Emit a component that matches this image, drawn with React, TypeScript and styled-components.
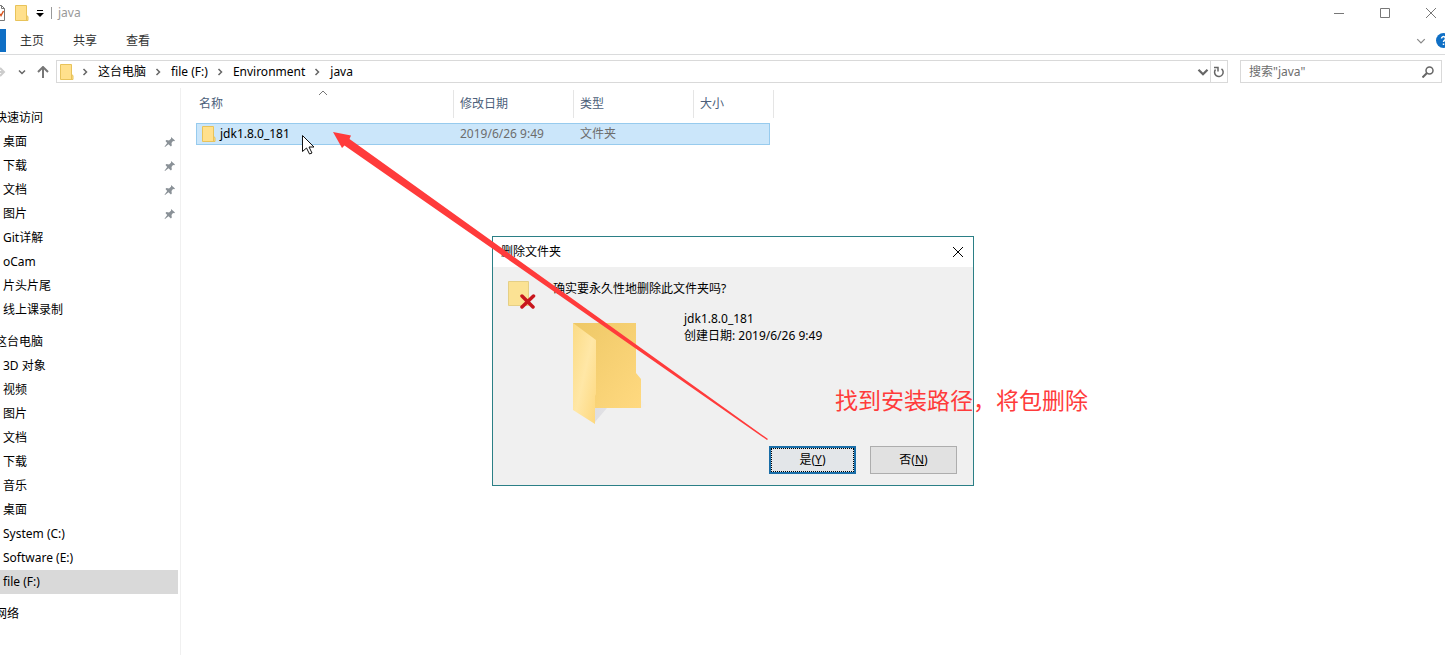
import React from "react";
import styled, { createGlobalStyle, css } from "styled-components";

const Global = createGlobalStyle`
  * { box-sizing: border-box; }
  html, body, #root { height: 100%; }
  body {
    margin: 0;
    background: #fff;
    color: #000;
    font: 12px/16px "Noto Sans", "Noto Sans CJK SC", sans-serif;
    overflow: hidden;
  }
  button, input { font: inherit; color: inherit; }
  svg { display: block; flex: none; }
`;

const Window = styled.div`
  position: relative;
  display: flex;
  flex-direction: column;
  min-height: 100%;
`;

const TitleBar = styled.header`
  display: flex;
  align-items: center;
  height: 25px;
  margin-right: -9px;
`;

const QuickTools = styled.div`
  display: flex;
  align-items: center;
  gap: 7px;
  flex: 1;
`;

const PlainButton = styled.button`
  display: flex;
  align-items: center;
  justify-content: center;
  padding: 0;
  border: 0;
  background: none;
`;

const WindowTitle = styled.h1`
  margin: 0;
  padding-left: 6px;
  border-left: 1px solid #999;
  font-size: 12px;
  font-weight: 400;
  line-height: 12px;
  color: #999;
`;

const CaptionButton = styled(PlainButton)`
  width: 46px;
  height: 24px;
`;

const Ribbon = styled.nav`
  display: flex;
  align-items: center;
  height: 30px;
  padding-top: 2px;
  border-bottom: 1px solid #dadbdc;
  color: #333;
`;

const FileTab = styled.div`
  width: 6px;
  height: 23px;
  margin-right: 14px;
  background: #0f6fc5;
`;

const RibbonTab = styled(PlainButton)`
  margin-right: 29px;
`;

const RibbonEnd = styled.div`
  display: flex;
  align-items: center;
  gap: 10px;
  margin-left: auto;
  margin-right: -6px;
`;

const AddressRow = styled.div`
  display: flex;
  align-items: center;
  height: 33px;
  padding-right: 3px;
`;

const History = styled.div`
  display: flex;
  align-items: center;
  gap: 11px;
  width: 56px;
`;

const AddressBar = styled.div`
  display: flex;
  align-items: center;
  flex: 1;
  height: 23px;
  padding-left: 3px;
  border: 1px solid #d9d9d9;
`;

const Crumbs = styled.div`
  display: flex;
  align-items: center;
  margin-left: 7px;
`;

const Crumb = styled.a`
  margin: 0 8px 0 9px;
  color: #000;
  text-decoration: none;
`;

const AddressEnd = styled.div`
  display: flex;
  align-items: center;
  height: 100%;
  margin-left: auto;
`;

const RefreshButton = styled(PlainButton)`
  width: 17px;
  height: 100%;
  margin-left: 1px;
  border-left: 1px solid #d9d9d9;
`;

const SearchBox = styled.label`
  display: flex;
  align-items: center;
  width: 202px;
  height: 23px;
  margin-left: 12px;
  padding: 0 7px 0 8px;
  border: 1px solid #d9d9d9;
`;

const SearchInput = styled.input`
  flex: 1;
  min-width: 0;
  padding: 0;
  border: 0;
  outline: 0;
  &::placeholder { color: #6d6d6d; opacity: 1; }
`;

const Content = styled.div`
  display: flex;
  flex: 1;
`;

const Tree = styled.nav`
  width: 181px;
  padding: 18px 2px 0 0;
  border-right: 1px solid #f0f0f0;
  overflow: hidden;
`;

const TreeGroup = styled.ul`
  margin: 0 0 8px;
  padding: 0;
  list-style: none;
`;

const TreeRow = styled.li<{ $root?: boolean; $selected?: boolean }>`
  display: flex;
  align-items: center;
  justify-content: space-between;
  height: 24px;
  padding: 0 2px 0 3px;
  ${(p) => p.$root && css`margin-left: -8px;`}
  ${(p) => p.$selected && css`background: #d9d9d9;`}
`;

const TreeLink = styled.a`
  color: #000;
  text-decoration: none;
  white-space: nowrap;
`;

const Main = styled.main`
  flex: 1;
  padding: 2px 0 0 15px;
`;

const FileTable = styled.table`
  width: 578px;
  table-layout: fixed;
  border-collapse: separate;
  border-spacing: 0;
  color: #6d6d6d;
  tbody::before { content: ""; display: block; height: 5px; }
`;

const Column = styled.col<{ $width: number }>`
  width: ${(p) => p.$width}px;
`;

const HeadCell = styled.th<{ $first?: boolean }>`
  height: 28px;
  padding: 0 0 0 ${(p) => (p.$first ? "3px" : "6px")};
  border-right: 1px solid #e5e5e5;
  font-weight: 400;
  text-align: left;
  color: #4c607a;
`;

const SortedHead = styled.div`
  position: relative;
  svg { position: absolute; left: 120px; top: -7px; }
`;

const Cell = styled.td`
  height: 22px;
  padding: 0 0 0 6px;
  background: #cbe6fa;
  border: solid #97cbee;
  border-width: 1px 0;
  &:first-child { border-left-width: 1px; padding-left: 5px; }
  &:last-child { border-right-width: 1px; }
`;

const FileName = styled.div`
  display: flex;
  align-items: center;
  gap: 4px;
  color: #000;
`;

const Dialog = styled.section`
  position: absolute;
  left: 492px;
  top: 236px;
  display: flex;
  flex-direction: column;
  width: 482px;
  height: 250px;
  border: 1px solid #2b7f86;
  background: #f0f0f0;
`;

const DialogTitle = styled.header`
  display: flex;
  align-items: center;
  justify-content: space-between;
  height: 30px;
  padding: 0 9px 0 8px;
  background: #fff;
`;

const DialogHeading = styled.h2`
  margin: 0;
  font-size: 12px;
  font-weight: 400;
`;

const DialogBody = styled.div`
  display: grid;
  grid-template-columns: 45px 131px 1fr;
  grid-template-rows: 29px 1fr;
  flex: 1;
  padding: 14px 0 0 15px;
`;

const DeleteIcon = styled.svg`
  grid-row: 1 / 3;
`;

const Question = styled.p`
  grid-column: 2 / 4;
  margin: 0;
`;

const Preview = styled.div`
  grid-column: 2;
  padding: 10px 0 0 19px;
`;

const Details = styled.p`
  margin: 0;
  line-height: 17px;
`;

const DialogActions = styled.footer`
  display: flex;
  justify-content: flex-end;
  gap: 14px;
  padding: 0 16px 11px;
`;

const DialogButton = styled.button<{ $primary?: boolean }>`
  width: 87px;
  height: 28px;
  padding: 0;
  background: #e1e1e1;
  border: 1px solid #adadad;
  ${(p) => p.$primary && css`
    background: #e3e6e9;
    border: 2px solid #1a6ea8;
    outline: 1px dotted #000;
    outline-offset: -3px;
  `}
`;

const Overlay = styled.svg`
  position: absolute;
  left: 0;
  top: 0;
  pointer-events: none;
`;

const Note = styled.p`
  position: absolute;
  left: 835px;
  top: 384px;
  margin: 0;
  font-size: 23px;
  line-height: 32px;
  color: #ff3b3b;
  white-space: nowrap;
`;

const SmallFolder = () => (
  <svg width="14" height="16" viewBox="0 0 14 16">
    <path d="M.5.5h11v10l1.500 1v4H.5z" fill="#ffe08c" stroke="#e8c35a" />
    <path d="M11.500 10v5" stroke="#e8c35a" fill="none" />
  </svg>
);

type ChevronProps = { dir?: "right" | "down" | "up"; size?: number; color?: string; weight?: number };

const chevronPaths = {
  right: "M2.500 1l3 3-3 3",
  down: "M1 2.500l3 3 3-3",
  up: "M0 6l4-4 4 4",
};

const Chevron = ({ dir = "right", size = 8, color = "#666", weight = 1.5 }: ChevronProps) => (
  <svg width={size} height={size} viewBox="0 0 8 8" fill="none" stroke={color} strokeWidth={weight}>
    <path d={chevronPaths[dir]} />
  </svg>
);

const Pin = () => (
  <svg width="12" height="12" viewBox="0 0 12 12" fill="#8a9197">
    <path d="M7 1l4 3.500-.8.8-1.200-.2L7.500 7l.3 2.500-.9.9-2.400-2.200L1 11 .5 10.800 3.200 7 1.500 5l.9-.9 2.600.4L7 2.800z" />
  </svg>
);

const quickAccess = [
  { name: "桌面", pinned: true },
  { name: "下载", pinned: true },
  { name: "文档", pinned: true },
  { name: "图片", pinned: true },
  { name: "Git详解" },
  { name: "oCam" },
  { name: "片头片尾" },
  { name: "线上课录制" },
];

const thisPc = ["3D 对象", "视频", "图片", "文档", "下载", "音乐", "桌面", "System (C:)", "Software (E:)", "file (F:)"];

const crumbs = ["这台电脑", "file (F:)", "Environment", "java"];

export default function App() {
  return (
    <Window>
      <Global />
      <TitleBar>
        <QuickTools>
          <svg width="8" height="16" viewBox="0 0 8 16" fill="none">
            <path d="M0 .5h1.500l3 3v12H0M1.500 .5v3h3" stroke="#777" />
            <path d="M0 9l1 1.500L3.500 6" stroke="#d9541e" strokeWidth="1.500" />
          </svg>
          <SmallFolder />
          <PlainButton aria-label="自定义快速访问工具栏">
            <svg width="8" height="8" viewBox="0 0 8 8"><path d="M1 1h6v1H1zM0 4h8L4 8z" fill="#000" /></svg>
          </PlainButton>
          <WindowTitle>java</WindowTitle>
        </QuickTools>
        <CaptionButton aria-label="最小化">
          <svg width="10" height="10" stroke="#777"><path d="M0 5.500h10" /></svg>
        </CaptionButton>
        <CaptionButton aria-label="最大化">
          <svg width="10" height="10" stroke="#777" fill="none"><path d="M.5.5h9v9h-9z" /></svg>
        </CaptionButton>
        <CaptionButton aria-label="关闭">
          <svg width="10" height="10" stroke="#777"><path d="M0 0l10 10M10 0L0 10" /></svg>
        </CaptionButton>
      </TitleBar>
      <Ribbon>
        <FileTab />
        <RibbonTab>主页</RibbonTab>
        <RibbonTab>共享</RibbonTab>
        <RibbonTab>查看</RibbonTab>
        <RibbonEnd>
          <Chevron dir="down" size={10} color="#888" weight={1} />
          <svg width="15" height="15" viewBox="0 0 15 15">
            <circle cx="7.500" cy="7.500" r="7.500" fill="#0f6fc5" />
            <path d="M5.500 5.500a2 2 0 1 1 3 1.800c-.8.500-1 .8-1 1.700M7.500 10.500v1.500" stroke="#fff" strokeWidth="1.500" fill="none" />
          </svg>
        </RibbonEnd>
      </Ribbon>
      <AddressRow>
        <History>
          <svg width="7" height="12" viewBox="0 0 7 12" fill="none" stroke="#ccc" strokeWidth="2"><path d="M0 6h4M0 2L4 6 0 10" /></svg>
          <Chevron dir="down" size={8} />
          <svg width="12" height="12" viewBox="0 0 12 12" fill="none" stroke="#777" strokeWidth="2"><path d="M6 12V1M1 6l5-5 5 5" /></svg>
        </History>
        <AddressBar>
          <SmallFolder />
          <Crumbs>
            {crumbs.map((c) => (
              <React.Fragment key={c}>
                <Chevron />
                <Crumb href="#">{c}</Crumb>
              </React.Fragment>
            ))}
          </Crumbs>
          <AddressEnd>
            <Chevron dir="down" size={12} />
            <RefreshButton aria-label="刷新">
              <svg width="12" height="12" viewBox="0 0 12 12" fill="none" stroke="#666" strokeWidth="1.500">
                <path d="M2.500 3.500A4.300 4.300 0 1 0 8.500 2.800M1 1.500h4v4" />
              </svg>
            </RefreshButton>
          </AddressEnd>
        </AddressBar>
        <SearchBox>
          <SearchInput aria-label="搜索" placeholder={'搜索"java"'} />
          <svg width="12" height="12" viewBox="0 0 12 12" fill="none" stroke="#666" strokeWidth="1.500"><circle cx="7.500" cy="4.500" r="3.500" /><path d="M5 7L.5 11.500" strokeWidth="2" /></svg>
        </SearchBox>
      </AddressRow>
      <Content>
        <Tree>
          <TreeGroup>
            <TreeRow $root><TreeLink href="#">快速访问</TreeLink></TreeRow>
            {quickAccess.map((i) => (
              <TreeRow key={i.name}><TreeLink href="#">{i.name}</TreeLink>{i.pinned && <Pin />}</TreeRow>
            ))}
          </TreeGroup>
          <TreeGroup>
            <TreeRow $root><TreeLink href="#">这台电脑</TreeLink></TreeRow>
            {thisPc.map((n) => (
              <TreeRow key={n} $selected={n === "file (F:)"}><TreeLink href="#">{n}</TreeLink></TreeRow>
            ))}
          </TreeGroup>
          <TreeGroup>
            <TreeRow $root><TreeLink href="#">网络</TreeLink></TreeRow>
          </TreeGroup>
        </Tree>
        <Main>
          <FileTable>
            <colgroup>
              <Column $width={258} />
              <Column $width={120} />
              <Column $width={120} />
              <Column $width={76} />
              <Column $width={4} />
            </colgroup>
            <thead>
              <tr>
                <HeadCell $first><SortedHead>名称<Chevron dir="up" color="#777" weight={1} /></SortedHead></HeadCell>
                <HeadCell>修改日期</HeadCell>
                <HeadCell>类型</HeadCell>
                <HeadCell colSpan={2}>大小</HeadCell>
              </tr>
            </thead>
            <tbody>
              <tr>
                <Cell><FileName><SmallFolder />jdk1.8.0_181</FileName></Cell>
                <Cell>2019/6/26 9:49</Cell>
                <Cell>文件夹</Cell>
                <Cell />
              </tr>
            </tbody>
          </FileTable>
        </Main>
      </Content>
      <Dialog role="dialog" aria-label="删除文件夹">
        <DialogTitle>
          <DialogHeading>删除文件夹</DialogHeading>
          <PlainButton aria-label="关闭">
            <svg width="12" height="12" viewBox="0 0 12 12" stroke="#000"><path d="M1 1l10 10M11 1L1 11" /></svg>
          </PlainButton>
        </DialogTitle>
        <DialogBody>
          <DeleteIcon width="28" height="28" viewBox="0 0 28 28">
            <path d="M.5.5h20v24H.5z" fill="#fbe294" stroke="#e5cf85" />
            <path d="M14 15l11 11M25.500 15L14 26" stroke="#c8161d" strokeWidth="3.500" strokeLinecap="round" />
          </DeleteIcon>
          <Question>确实要永久性地删除此文件夹吗?</Question>
          <Preview>
            <svg width="76" height="106" viewBox="0 0 76 106">
              <defs>
                <linearGradient id="back" x1="0" y1="0" x2="1" y2="1"><stop offset="0" stopColor="#eec866" /><stop offset="1" stopColor="#ffd980" /></linearGradient>
                <linearGradient id="flap" x1="0" y1="0" x2="1" y2="1"><stop offset="0" stopColor="#fbdb85" /><stop offset=".5" stopColor="#ffe7a6" /><stop offset="1" stopColor="#fdd77c" /></linearGradient>
                <linearGradient id="shade" x1="0" y1="0" x2="1" y2="0"><stop offset="0" stopColor="#dedee2" /><stop offset="1" stopColor="#f0f0f0" /></linearGradient>
              </defs>
              <path d="M69 80l6 6-6 2zM23 88h12L23 102z" fill="url(#shade)" />
              <path d="M1 3h63v50l5 6v29H22z" fill="url(#back)" />
              <path d="M1 3l23 17v54l-1 2v28L1 90z" fill="url(#flap)" />
            </svg>
          </Preview>
          <Details>jdk1.8.0_181<br />创建日期: 2019/6/26 9:49</Details>
        </DialogBody>
        <DialogActions>
          <DialogButton $primary>是(<u>Y</u>)</DialogButton>
          <DialogButton>否(<u>N</u>)</DialogButton>
        </DialogActions>
      </Dialog>
      <Overlay width="800" height="450" viewBox="0 0 800 450">
        <path d="M302.500 135.500v16l4-3.500 3 6 2.500-1-3-6h5z" fill="#fff" stroke="#111" />
        <path d="M333 132l18 3.500-1.500 3.500L768 439l-1 1L344.500 145.500 342 148z" fill="#ff3b3b" />
      </Overlay>
      <Note>找到安装路径，将包删除</Note>
    </Window>
  );
}
